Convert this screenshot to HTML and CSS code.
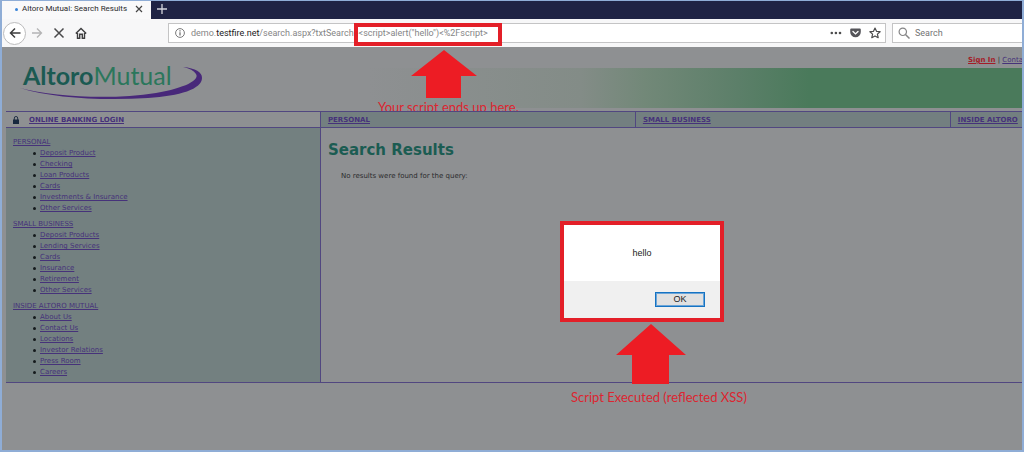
FILE: index.html
```html
<!DOCTYPE html>
<html lang="en">
<head>
<meta charset="utf-8">
<title>Altoro Mutual: Search Results</title>
<link rel="stylesheet" href="styles.css">
</head>
<body>
<div class="window">
  <div class="tabbar">
    <div class="tab">
      <span class="tab-dot"></span>
      <span class="tab-title">Altoro Mutual: Search Results</span>
      <button class="icon-btn" aria-label="Close tab"><svg width="8" height="8" viewBox="0 0 8 8"><path d="M1 1l6 6M7 1l-6 6" stroke="#444" stroke-width="1.2"/></svg></button>
    </div>
    <button class="icon-btn new-tab" aria-label="New tab"><svg width="10" height="10" viewBox="0 0 10 10"><path d="M5 0v10M0 5h10" stroke="#d4d5dc" stroke-width="1.3"/></svg></button>
  </div>

  <div class="toolbar">
    <div class="nav-buttons">
      <button class="icon-btn back" aria-label="Back"><svg width="12" height="12" viewBox="0 0 12 12" fill="none" stroke="#3c3c3d" stroke-width="1.5"><path d="M11.5 6H1.5M6 1.5L1.5 6 6 10.5"/></svg></button>
      <button class="icon-btn" aria-label="Forward"><svg width="12" height="12" viewBox="0 0 12 12" fill="none" stroke="#b4b4b5" stroke-width="1.3"><path d="M1 6h9.500M6 1.500L10.500 6 6 10.500"/></svg></button>
      <button class="icon-btn" aria-label="Stop"><svg width="12" height="12" viewBox="0 0 12 12"><path d="M1.500 1.500l9 9M10.500 1.500l-9 9" stroke="#4a4a4b" stroke-width="1.5"/></svg></button>
      <button class="icon-btn" aria-label="Home"><svg width="12" height="12" viewBox="0 0 12 12" fill="none" stroke="#3f3f40" stroke-width="1.4"><path d="M.8 6.500L6 1.400l5.200 5.100M2.500 6v5.200h2.200V7.300h2.600v3.900h2.200V6"/></svg></button>
    </div>
    <div class="urlbar">
      <svg width="10" height="10" viewBox="0 0 10 10" fill="none" stroke="#6b6b6c"><circle cx="5" cy="5" r="4.4" stroke-width=".9"/><path d="M5 4.300v3.200M5 2.300v1.100" stroke-width="1.2"/></svg>
      <div class="url" role="textbox" aria-label="Address" contenteditable="true" spellcheck="false">demo.<span class="host">testfire.net</span>/search.aspx?txtSearch=&lt;script&gt;alert("hello")&lt;%2Fscript&gt;</div>
      <div class="url-actions">
        <button class="icon-btn" aria-label="Page actions"><svg width="12" height="10" viewBox="0 0 12 10" fill="#4c4c4d"><circle cx="1.8" cy="5" r="1.3"/><circle cx="5.9" cy="5" r="1.3"/><circle cx="10" cy="5" r="1.3"/></svg></button>
        <button class="icon-btn" aria-label="Save to Pocket"><svg width="11" height="10" viewBox="0 0 11 10"><path d="M1.200.5h8.600q1 0 1 1V4a5.300 5.300 0 0 1-10.600 0V1.500q0-1 1-1z" fill="#55555a"/><path d="M3 3.500l2.500 2.400L8 3.500" fill="none" stroke="#fff" stroke-width="1.4" stroke-linecap="round"/></svg></button>
        <button class="icon-btn" aria-label="Bookmark"><svg width="12" height="12" viewBox="0 0 12 12"><path d="M6 1l1.500 3.300 3.600.4-2.700 2.400.8 3.600L6 8.900l-3.200 1.800.8-3.600L.9 4.700l3.600-.4z" fill="none" stroke="#4c4c4d" stroke-width="1.2" stroke-linejoin="round"/></svg></button>
      </div>
    </div>
    <label class="searchbar">
      <svg width="12" height="12" viewBox="0 0 12 12" fill="none" stroke="#858586"><circle cx="4.8" cy="4.8" r="3.7" stroke-width="1.2"/><path d="M7.500 7.500l4 4" stroke-width="1.5"/></svg>
      <input type="search" placeholder="Search" aria-label="Search">
    </label>
  </div>

  <div class="page">
    <header class="header">
      <a class="logo" href="#" aria-label="Altoro Mutual">
        <span class="logo-text"><b>Altoro</b>Mutual</span>
        <svg class="swoosh" width="184" height="34" viewBox="0 0 184 34"><path d="M0 21C34 30 92 33 136 26C165 21 180 13 176 7Q173 2 163 0Q182 2 182 11C182 22 160 29 128 31C82 34 32 31 0 21z" fill="#48287a"/></svg>
      </a>
      <nav class="top-links"><a class="sign-in" href="#">Sign In</a> | <a href="#">Conta</a></nav>
      <div class="banner"></div>
      <p class="note note-url">Your script ends up here.</p>
    </header>

    <nav class="sections">
      <a class="login" href="#"><svg width="6" height="8" viewBox="0 0 6 8"><path d="M1.300 4V2a1.700 1.500 0 0 1 3.400 0v2" fill="none" stroke="#243246"/><path d="M0 3.500h6V8H0z" fill="#17283f"/></svg><span>ONLINE BANKING LOGIN</span></a>
      <a href="#"><span>PERSONAL</span></a>
      <a href="#"><span>SMALL BUSINESS</span></a>
      <a href="#"><span>INSIDE ALTORO</span></a>
    </nav>

    <div class="body">
      <aside class="sidebar">
        <section>
          <a href="#">PERSONAL</a>
          <ul>
            <li><a href="#">Deposit Product</a></li>
            <li><a href="#">Checking</a></li>
            <li><a href="#">Loan Products</a></li>
            <li><a href="#">Cards</a></li>
            <li><a href="#">Investments &amp; Insurance</a></li>
            <li><a href="#">Other Services</a></li>
          </ul>
        </section>
        <section>
          <a href="#">SMALL BUSINESS</a>
          <ul>
            <li><a href="#">Deposit Products</a></li>
            <li><a href="#">Lending Services</a></li>
            <li><a href="#">Cards</a></li>
            <li><a href="#">Insurance</a></li>
            <li><a href="#">Retirement</a></li>
            <li><a href="#">Other Services</a></li>
          </ul>
        </section>
        <section>
          <a href="#">INSIDE ALTORO MUTUAL</a>
          <ul>
            <li><a href="#">About Us</a></li>
            <li><a href="#">Contact Us</a></li>
            <li><a href="#">Locations</a></li>
            <li><a href="#">Investor Relations</a></li>
            <li><a href="#">Press Room</a></li>
            <li><a href="#">Careers</a></li>
          </ul>
        </section>
      </aside>
      <main class="content">
        <h1>Search Results</h1>
        <p>No results were found for the query:</p>
      </main>
    </div>
  </div>

  <div class="mark-url"></div>
  <svg class="arrow arrow-url" width="66" height="48" viewBox="0 0 66 48"><path d="M33 0l33 26H50v22H15V26H0z" fill="#ed1c24"/></svg>

  <div class="dialog" role="alertdialog" aria-label="Alert">
    <p class="dialog-text">hello</p>
    <div class="dialog-actions"><button class="ok">OK</button></div>
  </div>
  <svg class="arrow arrow-dialog" width="70" height="60" viewBox="0 0 70 60"><path d="M35 0l35 31H53v29H16V31H0z" fill="#ed1c24"/></svg>
  <p class="note note-dialog">Script Executed (reflected XSS)</p>
</div>
</body>
</html>
```
FILE: styles.css
```css
* { box-sizing: border-box; }
body, p, h1, ul { margin: 0; padding: 0; }

body {
  font: 7px/11px "DejaVu Sans", Verdana, sans-serif;
  color: #2b2b2d;
}

a { color: #46327a; }

.window {
  position: relative;
  display: flex;
  flex-direction: column;
  min-height: 100vh;
  border: 2px solid #8fadd6;
  border-top-width: 1px;
  background: #8e9092;
  overflow: hidden;
}

.icon-btn {
  display: flex;
  align-items: center;
  justify-content: center;
  padding: 0;
  border: 0;
  background: none;
}

/* Browser frame */
.tabbar {
  display: flex;
  align-items: stretch;
  height: 18px;
  background: #1f2344;
  font: 8px/16px Roboto, "Segoe UI", sans-serif;
}

.tab {
  display: flex;
  align-items: center;
  gap: 4px;
  width: 149px;
  padding: 0 8px 2px 13px;
  background: #f9f9fa;
  color: #2a2a2c;
}

.tab-dot {
  width: 3px;
  height: 3px;
  border-radius: 50%;
  background: #3a84d8;
}

.tab-title { flex: 1; white-space: nowrap; }

.new-tab { width: 22px; padding-bottom: 3px; }

.toolbar {
  display: flex;
  align-items: center;
  height: 28px;
  background: #f7f7f8;
}

.nav-buttons {
  display: flex;
  align-items: center;
  gap: 10px;
  width: 166px;
  padding-left: 1px;
}

.back {
  width: 23px;
  height: 23px;
  margin-right: -5px;
  border: 1px solid #bcbcbd;
  border-radius: 50%;
  background: #fff;
}

.urlbar, .searchbar {
  display: flex;
  align-items: center;
  height: 20px;
  border: 1px solid #c4c4c5;
  background: #fff;
}

.urlbar {
  flex: 1;
  gap: 6px;
  padding: 0 4px 0 6px;
}

.url {
  flex: 1;
  font: 9px/16px Roboto, "Segoe UI", sans-serif;
  color: #858586;
  white-space: nowrap;
}

.host { color: #1a1a1b; }

.url-actions {
  display: flex;
  align-items: center;
  gap: 8px;
}

.searchbar {
  width: 130px;
  margin-left: 6px;
  padding-left: 5px;
  gap: 5px;
  border-right: 0;
}

.searchbar input {
  width: 100px;
  padding: 0;
  border: 0;
  background: none;
  font: 9px/16px Roboto, "Segoe UI", sans-serif;
}

.searchbar input::placeholder { color: #737374; opacity: 1; }

/* Site header */
.page { padding-left: 4px; }

.header {
  position: relative;
  display: grid;
  grid-template-columns: 30% 1fr;
  grid-template-rows: 21px 40px;
  height: 64px;
  overflow: hidden;
}

.logo {
  position: relative;
  grid-row: 1 / 3;
  padding: 12px 0 0 17px;
  text-decoration: none;
}

.logo-text {
  font: 25px/32px Lato, "Open Sans", sans-serif;
  color: #2b775c;
}

.logo-text b { color: #1b5a52; }

.swoosh { position: absolute; left: 14px; top: 20px; }

.top-links {
  grid-column: 2;
  justify-self: end;
  width: 54px;
  padding-top: 8px;
  white-space: nowrap;
}

.sign-in { color: #a41c28; font-weight: bold; }

.banner {
  grid-column: 2;
  background: linear-gradient(90deg, #8e9092 8%, #838c87 38%, #728878 47%, #5c7f69 60%, #4a7a5b 70%);
}

.sections {
  display: grid;
  grid-template-columns: repeat(4, 31%);
  border: solid #514780;
  border-width: 1px 0;
  overflow: hidden;
}

.sections a {
  display: flex;
  align-items: center;
  height: 15px;
  padding: 1px 0 0 7px;
  border-right: 1px solid #514780;
  background: #737f80;
  font-weight: bold;
  white-space: nowrap;
}

.sections .login { gap: 10px; background: #8e9092; }

/* Page body */
.body {
  display: grid;
  grid-template-columns: 31% 1fr;
  border-bottom: 1px solid #514780;
}

.sidebar {
  display: flex;
  flex-direction: column;
  gap: 5px;
  padding: 9px 7px 4px;
  border-right: 1px solid #514780;
  background: #738080;
}

.sidebar section > a { display: block; }

.sidebar ul { padding-left: 20px; list-style: none; }

.sidebar li {
  display: flex;
  align-items: center;
  gap: 4px;
}

.sidebar li::before {
  content: "";
  width: 3px;
  height: 3px;
  border-radius: 50%;
  background: #151a1c;
}

.content { padding: 10px 7px; }

.content h1 {
  font-size: 15px;
  line-height: 24px;
  color: #1b5c52;
}

.content p { padding: 9px 13px; }

/* Annotations and alert */
.note {
  position: absolute;
  font: 13px/16px Lato, Carlito, sans-serif;
  color: #dd2530;
  white-space: nowrap;
}

.note-url { left: 372px; top: 52px; }

.note-dialog { left: 569px; top: 388px; }

.mark-url {
  position: absolute;
  left: 352px;
  top: 22px;
  width: 148px;
  height: 23px;
  border: 4px solid #e31f28;
}

.arrow { position: absolute; }

.arrow-url { left: 409px; top: 49px; }

.arrow-dialog { left: 614px; top: 323px; }

.dialog {
  position: absolute;
  left: 558px;
  top: 220px;
  width: 164px;
  border: 4px solid #e31f28;
  background: #fff;
  font: 9px/12px "Liberation Sans", Arial, sans-serif;
  color: #222;
}

.dialog-text { padding: 22px 0 22px; text-align: center; }

.dialog-actions {
  display: flex;
  justify-content: flex-end;
  padding: 11px 15px 11px;
  background: #f0f0f0;
}

.ok {
  width: 50px;
  height: 15px;
  padding: 0;
  border: 1px solid #1673c2;
  outline: 1px solid #6ca5d8;
  outline-offset: -2px;
  background: #e1e1e1;
  font: 9px/11px "Liberation Sans", Arial, sans-serif;
  color: #222;
}
```
